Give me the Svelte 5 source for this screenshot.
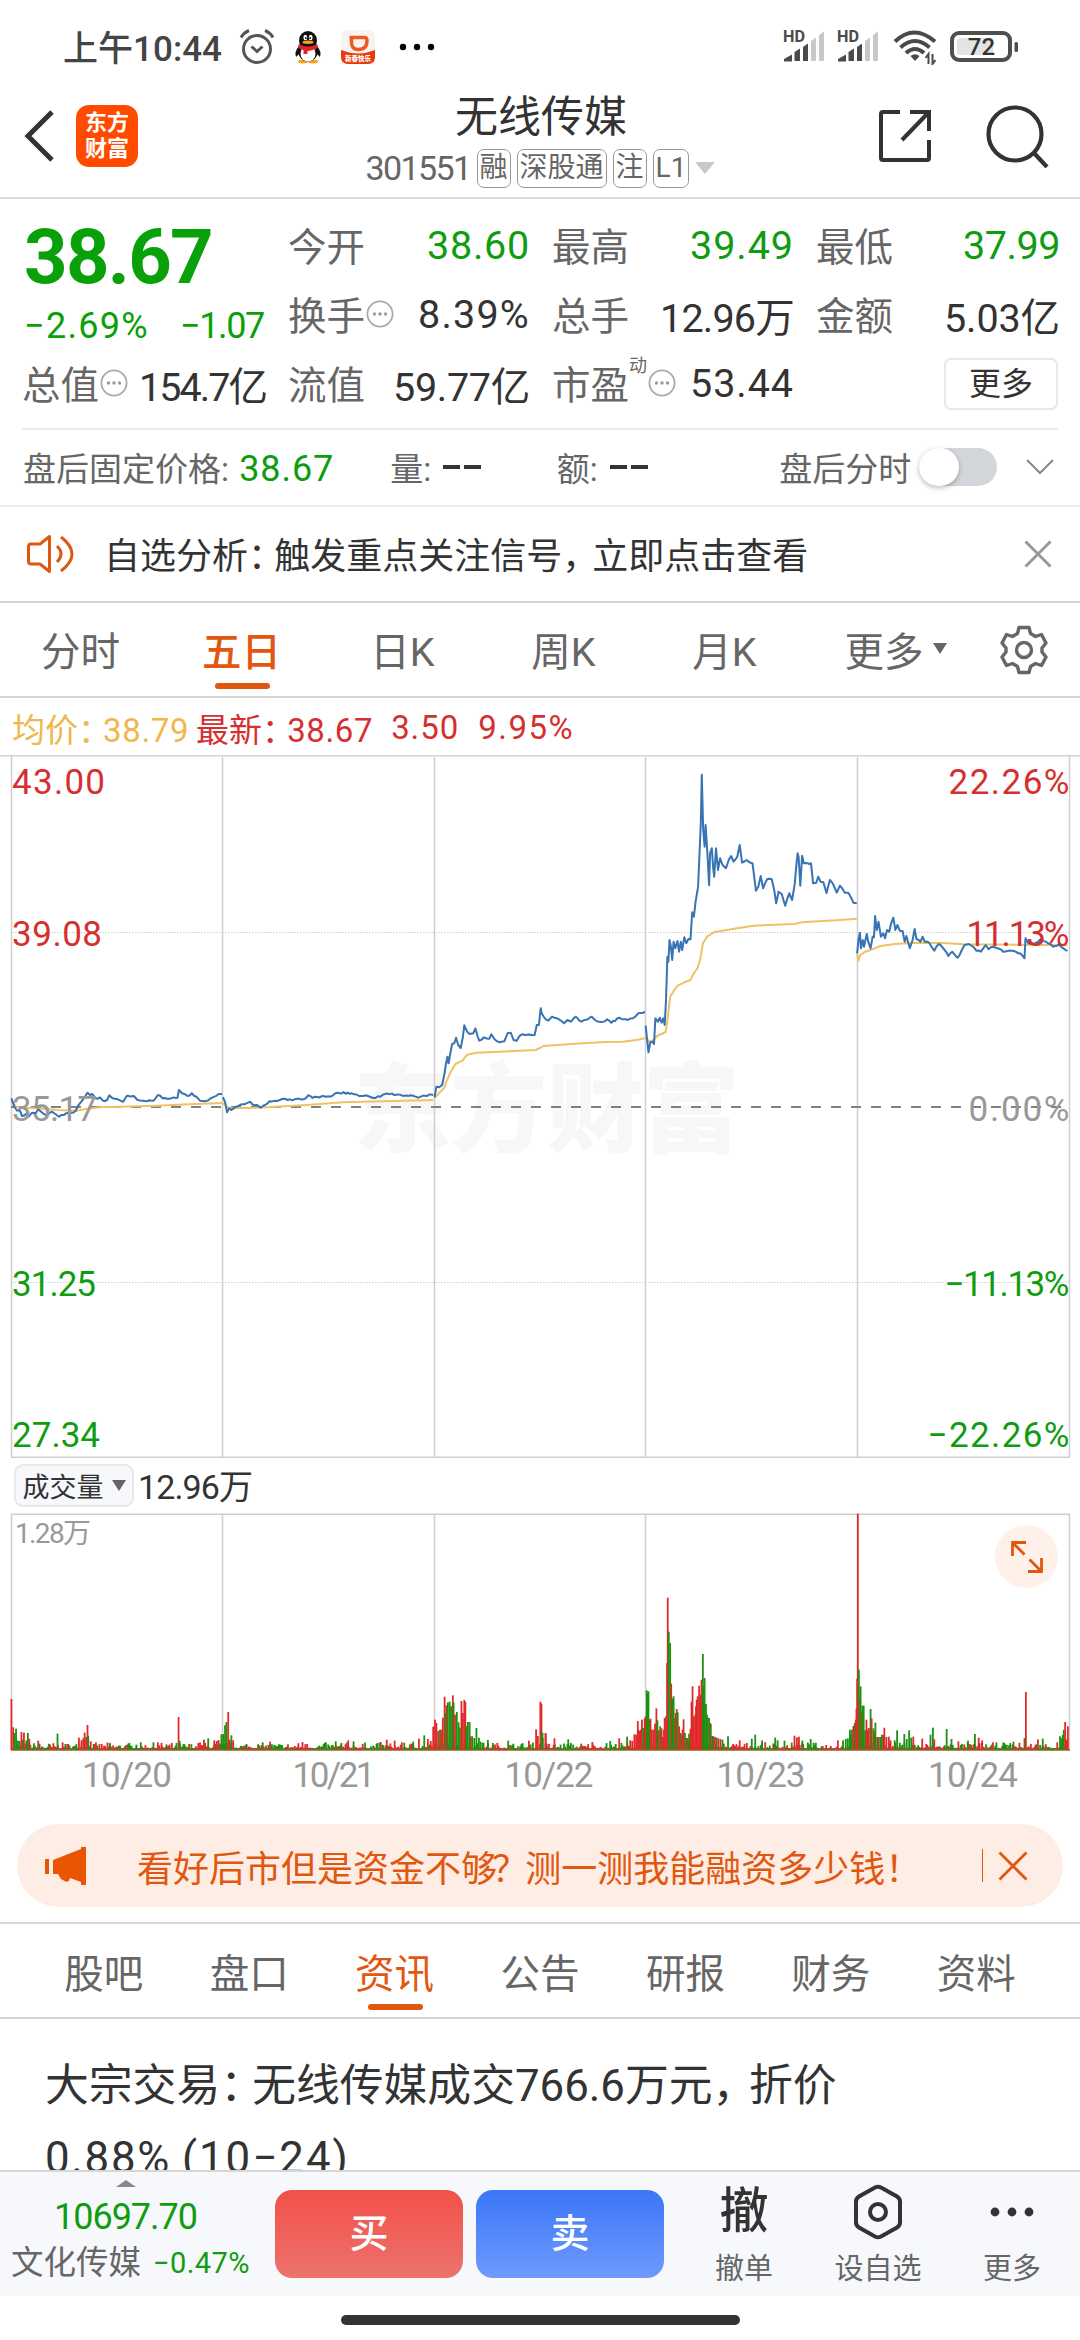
<script lang="ts">
	type Point = [number, number];

	const stats = [
		{ label: '今开', value: '38.60', width: 103, down: true },
		{ label: '最高', value: '39.49', width: 104, down: true },
		{ label: '最低', value: '37.99', width: 97, down: true },
		{ label: '换手', value: '8.39%', width: 112, info: true },
		{ label: '总手', value: '12.96万', width: 134 },
		{ label: '金额', value: '5.03亿', width: 116 },
		{ label: '总值', value: '154.7亿', width: 127, info: true },
		{ label: '流值', value: '59.77亿', width: 137 },
		{ label: '市盈', value: '53.44', width: 104, info: true, sup: '动' }
	];

	const periods = ['分时', '五日', '日K', '周K', '月K', '更多'];
	let period = '五日';

	const sections = ['股吧', '盘口', '资讯', '公告', '研报', '财务', '资料'];
	let section = '资讯';

	const dayLines = [222.5, 434.5, 645.5, 857.5];
	const dates = [
		{ text: '10/20', x: 127, width: 90 },
		{ text: '10/21', x: 334, width: 83 },
		{ text: '10/22', x: 549, width: 89 },
		{ text: '10/23', x: 761, width: 89 },
		{ text: '10/24', x: 973, width: 90 }
	];

	const axis = [
		{ y: 781, left: '43.00', lw: 93, right: '22.26%', rw: 121, tone: 'up' },
		{ y: 933, left: '39.08', lw: 90, right: '11.13%', rw: 103, tone: 'up' },
		{ y: 1108, left: '35.17', lw: 85, right: '0.00%', rw: 101, tone: 'flat' },
		{ y: 1283, left: '31.25', lw: 84, right: '−11.13%', rw: 125, tone: 'down' },
		{ y: 1434, left: '27.34', lw: 88, right: '−22.26%', rw: 142, tone: 'down' }
	];

	// Samples are kept in two halves, each with its own horizontal scale
	const L = (x: number) => x / 2.8;
	const R = (x: number) => 540 + x / 2.904;

	function parse(data: string, scale: (x: number) => number): Point[] {
		return data
			.trim()
			.split(/\s+/)
			.map((pair) => {
				const [x, y] = pair.split(',').map(Number);
				return [scale(x), 740 + y / 3];
			});
	}

	let seed = 7;
	function random() {
		seed = (seed * 16807) % 2147483647;
		return seed / 2147483647;
	}

	// Adds the small minute-to-minute movement between two samples
	function jitter(points: Point[]): Point[] {
		const out: Point[] = [];
		points.forEach(([x, y], i) => {
			out.push([x, y]);
			const next = points[i + 1];
			if (!next) return;
			const steps = Math.floor((next[0] - x) / 1.8);
			for (let s = 1; s < steps; s++) {
				const t = s / steps;
				out.push([x + (next[0] - x) * t, y + (next[1] - y) * t + (random() - 0.5) * 1.8]);
			}
		});
		return out;
	}

	const toPath = (points: Point[]) => points.map(([x, y]) => x.toFixed(1) + ',' + y.toFixed(1)).join(' ');

	const price = [
		parse(
			'32,1075 40,1100 48,1112 55,1110 62,1128 75,1120 80,1130 90,1118 100,1120 107,1108 115,1115 130,1125 145,1115 155,1122 165,1130 185,1120 200,1118 212,1112 220,1095 235,1075 245,1058 252,1065 258,1062 268,1075 280,1072 288,1082 300,1080 306,1066 315,1075 330,1078 345,1085 353,1070 375,1068 385,1080 400,1082 430,1082 442,1065 455,1075 480,1075 497,1073 501,1050 510,1060 525,1068 537,1060 550,1070 560,1082 575,1084 590,1075 600,1070 612,1062 622,1062',
			L
		),
		parse(
			'624,1072 630,1085 636,1117 642,1105 648,1110 660,1100 672,1095 690,1090 700,1085 708,1094 720,1095 730,1103 742,1095 755,1084 770,1082 790,1077 805,1080 825,1078 850,1078 863,1066 875,1074 900,1069 925,1070 945,1058 985,1060 1005,1068 1030,1068 1045,1074 1065,1070 1080,1061 1110,1064 1150,1066 1170,1073 1190,1067 1213,1065',
			L
		),
		[
			...parse(
				'1217,1072 1222,1040 1230,1042 1238,1035 1245,1000 1248,975 1253,950 1256,970 1260,945 1266,912 1272,910 1277,893 1283,915 1290,924 1296,890 1300,856 1308,875 1315,882 1325,880 1331,865 1337,888 1342,902 1355,892 1370,896 1376,883 1385,898 1398,907 1412,904 1421,880 1430,878 1438,900 1447,902 1458,885 1475,884 1497,885 1503,855 1509,855 1514,805',
				L
			),
			...parse(
				'5,820 12,832 24,842 35,830 55,838 70,850 80,840 90,845 103,830 120,845 150,830 160,840 180,846 195,838 207,848 230,833 255,840 270,835 285,820 305,815',
				R
			)
		],
		parse(
			'307,857 311,900 315,937 320,908 326,905 331,912 335,835 342,845 348,833 353,848 358,835 362,855 366,780 370,650 373,665 376,600 380,620 384,660 388,605 393,625 399,603 404,635 409,605 413,630 419,592 425,610 431,597 437,598 442,517 447,530 452,485 459,440 464,320 467,250 470,104 474,270 478,320 481,255 486,340 491,436 494,340 499,325 503,385 506,410 511,325 517,390 523,355 530,375 540,385 548,360 555,348 562,365 573,350 580,315 587,368 600,360 617,370 622,410 627,452 634,440 641,408 648,445 660,417 673,418 680,450 686,490 693,455 702,462 712,497 724,460 732,480 740,430 744,380 748,340 751,350 756,437 761,347 766,370 787,370 793,430 802,428 808,410 815,425 823,427 832,459 842,420 850,430 862,458 871,437 885,458 895,458 910,488 920,490',
			R
		),
		parse(
			'921,640 925,600 929,578 932,625 937,600 941,620 945,600 949,582 953,605 960,625 966,590 970,592 973,528 978,570 983,545 990,590 997,580 1002,595 1008,570 1014,575 1020,550 1026,533 1032,570 1038,555 1045,572 1053,573 1059,605 1064,588 1074,625 1082,600 1088,567 1093,597 1105,605 1111,590 1117,605 1130,608 1145,632 1158,612 1175,630 1186,648 1197,635 1213,653 1225,630 1233,615 1245,612 1255,618 1267,632 1280,635 1294,615 1303,628 1315,620 1328,625 1345,635 1370,632 1395,640 1407,655 1410,595 1418,610 1435,612 1457,597 1475,610 1490,620 1507,612 1520,625 1532,632',
			R
		)
	];

	const average = [
		parse('32,1080 45,1100 60,1103 100,1105 160,1110 215,1112 240,1107 280,1102 440,1097 530,1093 622,1089', L),
		parse('624,1090 636,1100 645,1105 720,1103 860,1095 960,1087 1213,1080', L),
		[
			...parse(
				'1217,1075 1230,1058 1243,1045 1250,1025 1260,1000 1275,972 1295,962 1308,944 1335,938 1500,930 1515,922',
				L
			),
			...parse('10,918 100,911 190,906 240,905 280,900 305,895', R)
		],
		parse(
			'307,888 316,905 330,900 340,888 365,876 371,830 378,770 390,750 400,737 420,727 437,720 445,703 457,685 465,660 473,610 485,590 505,577 560,567 620,557 740,552 760,547 860,541 920,536',
			R
		),
		parse('921,640 924,663 930,645 945,635 965,628 985,619 1030,612 1090,608 1170,609 1230,613 1532,616', R)
	];

	const volumeLeft =
		'32,598r 37,683r 41,700g 45,687g 50,723g 55,724g 60,697r 64,720g 67,699r 74,722g 78,700g 82,717r 107,723r 161,702g 183,733g 221,714r 228,722r 233,716r 237,699r 241,712r 245,676r 247,708g 254,725r 308,730g 352,737r 382,735g 442,728r 466,734g 500,652r 503,724g 560,728r 571,720r 583,716g 600,722r 607,724r 612,721r 620,704g 625,703g 630,677g 634,667g 639,637r 643,720r 648,707g 653,722r 690,733g 756,726r 847,727r 860,733r 940,725g 956,730g 975,722r 990,725g 1066,727r 1083,720r 1105,723r 1132,729g 1157,726g 1173,717r 1188,707g 1198,718r 1206,724r 1213,681r 1218,660r 1222,670r 1227,694r 1232,690g 1236,690r 1240,654r 1245,591r 1247,640g 1250,617r 1254,608g 1259,606g 1263,620g 1268,587r 1270,608g 1274,645r 1279,637g 1284,668g 1288,684g 1292,604r 1296,640r 1300,601r 1303,606r 1306,680g 1310,667g 1315,667g 1318,710r 1322,710g 1328,715g 1334,685g 1341,714g 1346,726g 1352,730g 1366,721g 1380,730g 1423,723g 1481,723r 1501,689r 1506,709r 1513,606r 1516,612r 1519,699g 1528,702r';
	const volumeRight =
		'5,700g 8,715g 16,700r 42,716r 82,719g 152,727r 204,724g 230,716r 253,711g 262,722r 268,724r 274,704r 279,705r 284,664r 287,692r 290,694r 293,690r 296,660r 300,685g 304,656r 307,650r 310,572g 313,580g 315,575g 318,660g 321,657r 325,690r 330,690r 334,672r 338,626r 341,662g 345,692r 349,680g 353,686r 357,712r 360,690r 362,655r 366,650r 369,490r 371,294r 374,396g 378,430g 381,552r 384,597g 388,590g 392,655g 394,640r 397,628r 400,638g 404,680r 408,700g 411,705r 414,690r 417,659r 421,700g 425,715r 429,715g 433,702g 437,687r 440,606r 443,560r 447,650r 451,645r 453,620r 455,600r 458,590r 462,558r 465,585r 467,600r 469,540r 473,463g 476,560g 478,535g 482,613g 485,645g 487,654g 491,655g 494,670r 496,673g 500,709r 504,710g 508,712r 513,714g 518,716r 524,718r 530,720g 546,710g 580,722r 615,717g 625,705g 645,722g 683,714g 690,722g 710,723g 739,708r 746,713r 752,711r 762,723g 786,718g 865,722r 880,722g 888,718g 894,716g 900,690g 903,705g 906,690g 910,679r 914,670g 917,660r 919,627r 921,537r 923,42r 926,510g 929,600r 931,560g 934,640r 936,618g 940,618g 944,692g 948,660r 952,690r 955,685r 960,628g 963,656r 968,686g 971,695r 974,669g 979,712g 983,712r 988,712g 993,705g 997,706r 1000,684r 1006,712r 1013,711r 1018,722r 1030,722g 1037,692g 1058,703g 1065,718g 1072,692g 1078,714g 1084,711r 1110,717r 1134,705g 1141,684g 1145,719r 1181,688g 1195,718g 1215,725r 1243,723g 1263,703g 1274,714r 1284,722r 1348,730g 1375,726g 1407,715g 1411,577r 1446,719r 1460,717g 1502,728r 1510,710g 1514,716g 1518,706g 1521,690g 1525,667r 1529,720r 1533,680r';

	function buildVolume() {
		const bars: { x: number; h: number; up: boolean }[] = [];
		// quiet trading
		for (let x = 12; x < 1068; x += 1.15) {
			const peak = random();
			bars.push({ x, h: 1.8 + peak * peak * peak * 6, up: Math.sin(x * 0.13) + random() * 2 > 1.1 });
		}
		const add = (data: string, scale: (x: number) => number) =>
			data.split(' ').forEach((item) => {
				const [x, rest] = item.split(',');
				bars.push({ x: scale(+x), h: (751 - parseInt(rest)) / 3, up: rest.endsWith('r') });
			});
		add(volumeLeft, L);
		add(volumeRight, R);
		return bars;
	}

	const volume = buildVolume();

	// Spreads the letters of a number so that it takes the given width
	function track(node: HTMLElement, width: number) {
		const natural = node.getBoundingClientRect().width;
		const count = (node.textContent || '').trim().length;
		node.style.letterSpacing = (width - natural) / count + 'px';
	}
</script>

{#snippet info()}
	<svg class="info" viewBox="0 0 28 28" width="28" height="28">
		<circle cx="14" cy="14" r="12.6" fill="none" stroke="#aaa" stroke-width="1.8" />
		<circle cx="8.5" cy="14" r="1.7" fill="#999" />
		<circle cx="14" cy="14" r="1.7" fill="#999" />
		<circle cx="19.5" cy="14" r="1.7" fill="#999" />
	</svg>
{/snippet}

{#snippet signal()}
	<svg width="42" height="40" viewBox="0 -6 42 40">
		<text class="hd" x="0" y="12" textLength="22" lengthAdjust="spacingAndGlyphs">HD</text>
		<path d="M1 31.500v-2.500l8-4.500v7zM11.500 31v-9l5.500-3.500v12.500zM20 31v-14l5-3.500v17.500z" fill="#4a4a4a" />
		<path d="M28 31v-20l5-3.500v23.500zM36 31v-26l5-3.500v29.500z" fill="#c8c8c8" />
	</svg>
{/snippet}

<div class="screen">
	<div class="status">
		<span class="clock" use:track={159}>上午10:44</span>
		<svg class="alarm" width="36" height="36" viewBox="0 0 36 36" fill="none" stroke="#555" stroke-width="3">
			<circle cx="18" cy="20" r="13.500" />
			<path d="M12.500 17.500l5.500 5 5.500-5M2 8.500q3-5 8-7M34 8.500q-3-5-8-7" />
		</svg>
		<svg class="qq" width="34" height="34" viewBox="0 0 34 34">
			<path d="M8 16q-5 6-3 11l4-4zM26 16q5 6 3 11l-4-4z" fill="#111" />
			<ellipse cx="12" cy="31.500" rx="5" ry="1.900" fill="#f5a71c" />
			<ellipse cx="22" cy="31.500" rx="5" ry="1.900" fill="#f5a71c" />
			<ellipse cx="17" cy="21" rx="10" ry="10.500" fill="#111" />
			<ellipse cx="17" cy="23.500" rx="7.500" ry="8" fill="#fff" />
			<ellipse cx="17" cy="10.500" rx="9" ry="9.500" fill="#111" />
			<ellipse cx="14.300" cy="7.500" rx="1.900" ry="2.700" fill="#fff" />
			<ellipse cx="19.700" cy="7.500" rx="1.900" ry="2.700" fill="#fff" />
			<circle cx="14.800" cy="8" r=".9" fill="#111" />
			<circle cx="19.200" cy="8" r=".9" fill="#111" />
			<ellipse cx="17" cy="12.300" rx="5.500" ry="1.700" fill="#f5a71c" />
			<path d="M7.500 14q9.500 5 19 0v4q-6 3-10 3v3h-4v-4q-3-.5-5-2z" fill="#e0242b" />
		</svg>
		<svg class="ride" width="34" height="34" viewBox="0 0 34 34">
			<rect width="34" height="34" rx="7" fill="#f6f3f2" />
			<path d="M0 20q17 7 34 0v7q0 7-7 7H7q-7 0-7-7z" fill="#e8380d" />
			<path d="M8.500 7.500h15q2.500 0 2.500 3c0 6-3 9-8.500 9q-7 0-7-7V8" fill="none" stroke="#ee5a1c" stroke-width="3.400" />
			<text class="ride-name" x="17" y="30.500" text-anchor="middle">新春快乐</text>
		</svg>
		<svg width="36" height="8" viewBox="0 0 36 8">
			<circle cx="4" cy="4" r="3.200" />
			<circle cx="18" cy="4" r="3.200" />
			<circle cx="32" cy="4" r="3.200" />
		</svg>
		<div class="radio">
			{@render signal()}
			{@render signal()}
			<svg class="wifi" width="44" height="36" viewBox="0 0 44 36" fill="none" stroke="#4a4a4a" stroke-width="4">
				<path d="M2 12.500q19-18 40 0M7.500 18.500q14.500-13 29 0M13 24q9-8 18 0" />
				<path d="M17.500 27q4.500-3.500 9 0l-4.500 5z" fill="#4a4a4a" stroke="none" />
				<path d="M35.500 35v-10l-3 4M39.500 25v10l3-4" stroke-width="2" />
			</svg>
			<svg width="70" height="32" viewBox="0 0 70 32">
				<rect x="2" y="2" width="58" height="27" rx="7" fill="#fff" stroke="#4f4f4f" stroke-width="4" />
				<rect x="7" y="7" width="36" height="17" rx="3" fill="#e4e4e4" />
				<rect x="64.500" y="11" width="3.500" height="10" rx="1.500" fill="#4f4f4f" />
				<text class="charge" x="31.500" y="24" text-anchor="middle">72</text>
			</svg>
		</div>
	</div>

	<header>
		<svg class="back" width="32" height="54" viewBox="0 0 32 54" fill="none" stroke="#333" stroke-width="5">
			<path d="M28 3L4 27l24 24" />
		</svg>
		<div class="logo"><span>东方</span><span>财富</span></div>
		<div class="heading">
			<h1>无线传媒</h1>
			<div class="code">
				<span class="number" use:track={105}>301551</span>
				<span class="tag">融</span>
				<span class="tag">深股通</span>
				<span class="tag">注</span>
				<span class="tag">L1</span>
				<svg width="20" height="12" viewBox="0 0 20 12"><path d="M0 0h20L10 12z" fill="#c9c9c9" /></svg>
			</div>
		</div>
		<svg class="share" width="54" height="54" viewBox="0 0 54 54" fill="none" stroke="#333" stroke-width="4">
			<path d="M22 3H5q-2 0-2 2v44q0 2 2 2h44q2 0 2-2V31M32 3h19v19M51 3L24 31" />
		</svg>
		<svg width="64" height="64" viewBox="0 0 64 64" fill="none" stroke="#333" stroke-width="4.200">
			<circle cx="29" cy="30" r="26.500" />
			<path d="M48 49l13 14" />
		</svg>
	</header>

	<section class="quote">
		<div class="last">
			<strong use:track={188}>38.67</strong>
			<div class="change">
				<span use:track={125}>−2.69%</span>
				<span use:track={84}>−1.07</span>
			</div>
		</div>
		{#each stats as item}
			<div class="stat">
				<span class="name">
					<span class="label">{item.label}</span>{#if item.sup}<sup>{item.sup}</sup>{/if}{#if item.info}{@render info()}{/if}
				</span>
				<span class="value" class:down={item.down} use:track={item.width}>{item.value}</span>
			</div>
		{/each}
		<div class="stat end"><button class="more">更多</button></div>
	</section>

	<section class="after">
		<span class="fixed">盘后固定价格: <b class="down" use:track={95}>38.67</b></span>
		<span class="pair">量: <i></i><i></i></span>
		<span class="pair amount">额: <i></i><i></i></span>
		<span class="switch-label">盘后分时</span>
		<span class="switch"><span class="knob"></span></span>
		<svg width="28" height="18" viewBox="0 0 28 18" fill="none" stroke="#888" stroke-width="2">
			<path d="M1 2l13 13L27 2" />
		</svg>
	</section>

	<section class="notice">
		<svg width="48" height="40" viewBox="0 0 48 40" fill="none" stroke="#e2570f" stroke-width="3">
			<path d="M22.500 2.500v35L13 30H4q-2.500 0-2.500-2.500v-15Q1.500 10 4 10h9z" stroke-linejoin="round" />
			<path d="M30 12q8 8 0 16M34 3q22 17 0 34" />
		</svg>
		<p>自选分析<span class="colon">：</span>触发重点关注信号<span class="comma">，</span>立即点击查看</p>
		<svg width="28" height="28" viewBox="0 0 28 28" stroke="#999" stroke-width="3">
			<path d="M1.500 1.500l25 25M26.500 1.500l-25 25" />
		</svg>
	</section>

	<nav class="periods">
		{#each periods as name}
			<button class:active={period === name} on:click={() => (period = name)}>
				{name}{#if name === '更多'}<svg class="caret" width="14" height="11" viewBox="0 0 14 11"
						><path d="M0 0h14L7 11z" fill="#666" /></svg
					>{/if}
			</button>
		{/each}
		<svg class="gear" width="48" height="50" viewBox="0 0 48 50" fill="none" stroke="#666" stroke-width="3.400">
			<path
				d="M19 2.500h10l1.500 6 5 3 6-2L46 18l-4 5v4l4 5-4.500 8.500-6-2-5 3-1.500 6H19l-1.500-6-5-3-6 2L2 32l4-5v-4l-4-5 4.500-8.500 6 2 5-3z"
				stroke-linejoin="round"
			/>
			<circle cx="24" cy="25" r="7.500" />
		</svg>
	</nav>

	<div class="legend">
		<span class="avg">均价<span class="colon">：</span><span use:track={86}>38.79</span></span>
		<span class="up latest">最新<span class="colon">：</span><span use:track={86}>38.67</span></span>
		<span class="up" use:track={68}>3.50</span>
		<span class="up" use:track={96}>9.95%</span>
	</div>

	<svg class="chart" width="1080" height="703" viewBox="0 755 1080 703">
		<text class="watermark" x="354" y="1144" textLength="386">东方财富</text>
		<g stroke="#cfcfcf" stroke-width="1.500">
			<path d="M0 755.700H1080" stroke="#d4d4d4" />
			<path d="M11.500 755V1457M1069.500 755V1457M11 1457.200H1070" />
			{#each dayLines as x}
				<path d="M{x} 757V1457" />
			{/each}
			<path d="M12 932.500H1069M12 1282.500H1069" stroke-width="1" stroke-dasharray="1.500 1.500" />
		</g>
		<path d="M11 1107H1069" stroke="#808080" stroke-width="2" stroke-dasharray="10 10" />
		{#each average as points}
			<polyline class="average" points={toPath(points)} />
		{/each}
		{#each price as points}
			<polyline class="price" points={toPath(jitter(points))} />
		{/each}
		{#each axis as row}
			<text class="tick {row.tone}" x="12" y={row.y + 12.5} textLength={row.lw}>{row.left}</text>
			<text class="tick {row.tone}" x={1069.5 - row.rw} y={row.y + 12.5} textLength={row.rw}>{row.right}</text>
		{/each}
	</svg>

	<div class="volume-head">
		<span class="chip">成交量<svg width="14" height="11" viewBox="0 0 14 11"><path d="M0 0h14L7 11z" fill="#666" /></svg></span>
		<span class="total" use:track={114}>12.96万</span>
	</div>

	<div class="volume">
		<svg width="1080" height="290" viewBox="0 1513 1080 290">
			<g stroke="#cfcfcf" stroke-width="1.500">
				<path d="M11 1514.200H1070M11.500 1514V1750M1069.500 1514V1750" />
				{#each dayLines as x}
					<path d="M{x} 1514V1750" />
				{/each}
			</g>
			{#each volume as bar}
				<rect x={bar.x - 0.9} y={1750 - bar.h} width="1.8" height={bar.h} class={bar.up ? 'bar-up' : 'bar-down'} />
			{/each}
			<path d="M11 1750H1070" stroke="#94602f" stroke-width="1.500" />
			<text class="max" x="15" y="1543" textLength="76">1.28万</text>
			{#each dates as date}
				<text class="date" x={date.x - date.width / 2} y="1787" textLength={date.width}>{date.text}</text>
			{/each}
		</svg>
		<button class="expand" aria-label="expand">
			<svg width="32" height="32" viewBox="0 0 32 32" fill="none" stroke="#e2570f" stroke-width="2.800">
				<path d="M1.500 15V1.500H15M2 2l11.500 11.500M17 30.500h13.500V17M30 30L18.500 18.500" />
			</svg>
		</button>
	</div>

	<div class="promo">
		<svg width="42" height="38" viewBox="0 0 42 38" fill="#ea5504">
			<path d="M0 12h4v15H0zM8 13L36 2V0h5v38h-5v-3l-11-4-1 3q-3 2-6-1l-2-1-3-5h-5z" />
		</svg>
		<p>看好后市但是资金不够<span class="question">？</span>测一测我能融资多少钱！</p>
		<span class="bar"></span>
		<svg width="30" height="30" viewBox="0 0 30 30" stroke="#e2570f" stroke-width="2.800">
			<path d="M1.500 1.500l27 27M28.500 1.500l-27 27" />
		</svg>
	</div>

	<nav class="sections">
		{#each sections as name}
			<button class:active={section === name} on:click={() => (section = name)}>{name}</button>
		{/each}
	</nav>

	<article>
		大宗交易<span class="colon">：</span>无线传媒成交<span use:track={110}>766.6</span>万元<span class="comma">，</span>折价<br />
		<span use:track={126}>0.88%</span> <span use:track={168}>(10−24)</span>
	</article>

	<footer>
		<div class="index">
			<svg width="20" height="7" viewBox="0 0 20 7"><path d="M10 0l10 7H0z" fill="#888" /></svg>
			<span class="points down" use:track={143}>10697.70</span>
			<div class="sector">文化传媒 <span class="down" use:track={97}>−0.47%</span></div>
		</div>
		<button class="trade buy">买</button>
		<button class="trade sell">卖</button>
		<div class="action">
			<span class="glyph">撤</span>
			<span>撤单</span>
		</div>
		<div class="action">
			<svg width="50" height="56" viewBox="0 0 50 56" fill="none" stroke="#333" stroke-width="4">
				<path d="M22 3.500q3-1.500 6 0l16 9q3 2 3 5v21q0 3-3 5l-16 9q-3 1.500-6 0l-16-9q-3-2-3-5v-21q0-3 3-5z" />
				<circle cx="25" cy="28" r="8" />
			</svg>
			<span>设自选</span>
		</div>
		<div class="action">
			<svg width="44" height="10" viewBox="0 0 44 10" fill="#333">
				<circle cx="5" cy="5" r="4.400" />
				<circle cx="22" cy="5" r="4.400" />
				<circle cx="39" cy="5" r="4.400" />
			</svg>
			<span>更多</span>
		</div>
	</footer>
	<div class="home"><span></span></div>
</div>

<style>
	:global(body) {
		background: #fff;
	}
	.screen {
		width: 1080px;
		height: 2340px;
		overflow: hidden;
		background: #fff;
		color: #333;
		font-family: Roboto, 'Noto Sans CJK SC', sans-serif;
		font-size: 36px;
		display: flex;
		flex-direction: column;
	}
	.screen > * {
		box-sizing: border-box;
		flex: none;
	}
	svg {
		display: block;
		flex: none;
	}
	button {
		border: 0;
		padding: 0;
		background: none;
		font: inherit;
		color: inherit;
	}
	p,
	h1 {
		margin: 0;
		white-space: nowrap;
	}
	span {
		white-space: nowrap;
	}
	.up {
		color: #d62f2f;
		fill: #d62f2f;
	}
	.down {
		color: #109c10;
		fill: #109c10;
	}
	.flat {
		fill: #999;
	}
	/* half-width punctuation with a little air behind it */
	.colon,
	.comma {
		font-feature-settings: 'halt';
		margin-right: 0.23em;
	}
	.comma {
		margin-right: 0.33em;
	}
	.question {
		margin: 0 -0.08em 0 -0.14em;
	}

	/* status bar */
	.status {
		height: 98px;
		padding: 0 60px 4px 63px;
		display: flex;
		align-items: center;
	}
	.clock {
		font-size: 35px;
		font-weight: 500;
		color: #444;
		margin-top: -3px;
	}
	.alarm {
		margin-left: 17px;
	}
	.qq {
		margin-left: 16px;
	}
	.ride {
		margin: 0 24px 0 16px;
	}
	.ride-name {
		font-size: 6.500px;
		font-weight: 900;
		fill: #fff;
	}
	.radio {
		margin-left: auto;
		display: flex;
		align-items: center;
		gap: 13.500px;
	}
	.radio svg:first-child {
		margin-right: -1.500px;
	}
	.radio svg:nth-child(-n + 2) {
		margin-top: -7px;
	}
	.hd {
		font-size: 16px;
		font-weight: 700;
		fill: #4a4a4a;
	}
	.charge {
		font-size: 24px;
		font-weight: 500;
		fill: #333;
	}

	/* title bar */
	header {
		height: 101px;
		padding: 0 30px 0 24px;
		border-bottom: 2px solid #dadada;
		display: flex;
		align-items: center;
	}
	.back {
		margin-top: -24px;
	}
	.logo {
		width: 62px;
		height: 62px;
		margin: -24px 0 0 20px;
		border-radius: 13px;
		background: #ff4a00;
		color: #fff;
		font-size: 22px;
		font-weight: 700;
		line-height: 26px;
		display: flex;
		flex-direction: column;
		align-items: center;
		justify-content: center;
	}
	.heading {
		flex: 1;
		height: 100%;
		margin-left: 71px;
		display: flex;
		flex-direction: column;
		align-items: center;
	}
	h1 {
		font-size: 43px;
		font-weight: 400;
		line-height: 42px;
		margin: -2px 5px 3px 0;
	}
	.code {
		display: flex;
		align-items: center;
		gap: 6px;
		height: 54px;
		margin-right: 6px;
		color: #666;
	}
	.number {
		font-size: 34px;
	}
	.tag {
		box-sizing: border-box;
		height: 39px;
		padding: 0 2px;
		border: 1.500px solid #999;
		border-radius: 7px;
		font-size: 28px;
		line-height: 35px;
	}
	.share {
		margin: -24px 54px 0 0;
	}
	header > svg:last-child {
		margin-top: -24px;
	}

	/* quote */
	.quote {
		height: 229px;
		padding: 12px 22px 0;
		display: grid;
		grid-template-columns: 242px 240px 240px 242px;
		grid-template-rows: repeat(3, 69px);
		column-gap: 24px;
	}
	.last {
		grid-row: span 2;
		color: #09a009;
		padding: 11px 0 0 2px;
	}
	.last strong {
		font-size: 76px;
		line-height: 70px;
		display: inline-block;
		vertical-align: top;
	}
	.change {
		display: flex;
		justify-content: space-between;
		font-size: 36px;
		line-height: 68px;
	}
	.stat {
		display: flex;
		align-items: center;
		justify-content: space-between;
	}
	.name {
		display: flex;
		align-items: center;
		font-size: 38.500px;
		color: #666;
	}
	.label {
		margin-top: -4px;
	}
	.name sup {
		font-size: 18px;
		margin-top: -40px;
	}
	.name svg {
		margin: -2px 0 0 1px;
	}
	.value {
		font-size: 39.500px;
		margin-right: -2px;
	}
	.end {
		justify-content: flex-end;
	}
	.more {
		width: 114px;
		height: 52px;
		border: 2px solid #e8e8e8;
		border-radius: 7px;
		font-size: 32px;
		line-height: 46px;
	}

	/* after-hours */
	.after {
		height: 79px;
		padding: 0 26px 0 23px;
		border-bottom: 2px solid #ececec;
		background: linear-gradient(#ececec, #ececec) 22px 0 / 1036px 2px no-repeat;
		display: flex;
		align-items: center;
		font-size: 33px;
		color: #666;
	}
	.after b {
		font-weight: 400;
		font-size: 36px;
		display: inline-block;
		margin-left: 2px;
	}
	.fixed {
		width: 368px;
	}
	.pair {
		width: 167px;
		display: flex;
		align-items: center;
	}
	.pair i {
		width: 17px;
		height: 4px;
		margin-left: 4px;
		background: #333;
	}
	.pair i:first-of-type {
		margin-left: 12px;
	}
	.amount {
		width: 223px;
	}
	.switch {
		width: 78px;
		height: 38px;
		margin: 0 29px 0 8px;
		border-radius: 19px;
		background: #d2d6db;
		display: flex;
		align-items: center;
	}
	.knob {
		width: 40px;
		height: 38px;
		border-radius: 20px;
		background: #fff;
		box-shadow: 0 2px 5px rgba(0, 0, 0, 0.25);
	}

	/* notice */
	.notice {
		height: 96px;
		padding: 0 28px 0 27px;
		border-bottom: 2px solid #d6d6d6;
		display: flex;
		align-items: center;
	}
	.notice p {
		flex: 1;
		margin: -3px 0 0 29px;
		font-size: 36px;
	}

	/* tab bars */
	.periods {
		height: 95px;
		border-bottom: 2px solid #d6d6d6;
		display: flex;
		align-items: center;
	}
	.periods button,
	.sections button {
		height: 100%;
		font-size: 39.500px;
		color: #666;
		display: flex;
		align-items: center;
		justify-content: center;
		position: relative;
	}
	.periods button {
		width: 161px;
		padding-bottom: 2px;
	}
	.periods button:nth-of-type(6) {
		width: 181px;
	}
	.caret {
		margin-left: 9px;
	}
	button.active {
		color: #e2570f;
	}
	.periods .active {
		font-weight: 500;
	}
	button.active::after {
		content: '';
		position: absolute;
		left: 50%;
		bottom: 7px;
		width: 55px;
		height: 6px;
		margin-left: -27px;
		border-radius: 3px;
		background: #e2570f;
	}
	.gear {
		margin-left: 14px;
	}

	.legend {
		height: 57px;
		padding: 2px 0 0 12px;
		display: flex;
		align-items: center;
		font-size: 33px;
	}
	.legend > span {
		margin-right: 19px;
	}
	.legend .colon {
		margin-right: 0.26em;
	}
	.legend .avg {
		color: #efb84c;
		margin-right: 7px;
	}
	.legend .latest {
		margin-right: 18px;
	}
	.legend span span:last-child {
		display: inline-block;
	}

	/* price chart */
	.price,
	.average {
		fill: none;
		stroke-width: 2;
		stroke-linejoin: round;
	}
	.price {
		stroke: #3873b3;
	}
	.average {
		stroke: #f0c265;
	}
	.tick {
		font-size: 35px;
	}
	.watermark {
		font-size: 97px;
		font-weight: 900;
		fill: #f7f7f7;
	}

	/* volume */
	.volume-head {
		height: 55px;
		padding-left: 14px;
		display: flex;
		align-items: center;
		gap: 4px;
	}
	.chip {
		box-sizing: border-box;
		width: 120px;
		height: 43px;
		border: 2px solid #e6e8eb;
		border-radius: 9px;
		background: #f6f8fb;
		font-size: 27px;
		display: flex;
		align-items: center;
		justify-content: center;
		gap: 8px;
	}
	.total {
		font-size: 34px;
		margin-top: -3px;
	}
	.volume {
		height: 280px;
		position: relative;
	}
	.bar-up {
		fill: #e02a2a;
	}
	.bar-down {
		fill: #1d910f;
	}
	.max {
		font-size: 28px;
		fill: #999;
	}
	.date {
		font-size: 35px;
		fill: #999;
	}
	.expand {
		position: absolute;
		right: 22px;
		top: 12px;
		width: 63px;
		height: 63px;
		border-radius: 50%;
		background: #fff1ea;
		display: flex;
		align-items: center;
		justify-content: center;
	}

	/* promo */
	.promo {
		height: 83px;
		margin: 31px 17px 15px;
		padding: 0 35px 0 28px;
		border-radius: 42px;
		background: #fdede4;
		color: #e2570f;
		display: flex;
		align-items: center;
	}
	.promo p {
		flex: 1;
		margin-left: 50px;
		font-size: 36px;
	}
	.bar {
		width: 1px;
		height: 33px;
		margin-right: 15px;
		background: #e2570f;
	}

	.sections {
		height: 97px;
		padding: 0 31px;
		border-top: 2px solid #d6d6d6;
		border-bottom: 2px solid #d6d6d6;
		display: flex;
	}
	.sections button {
		flex: 1;
	}

	article {
		height: 151px;
		padding: 31px 0 0 45px;
		overflow: hidden;
		font-size: 43.800px;
		line-height: 72px;
	}
	article span {
		display: inline-block;
	}

	/* trade bar */
	footer {
		height: 126px;
		border-top: 2px solid #d6d6d6;
		background: #f6f8fb;
		display: flex;
		align-items: flex-start;
	}
	.index {
		width: 251px;
		margin-right: 24px;
		display: flex;
		flex-direction: column;
		align-items: center;
	}
	.index svg {
		margin: 8px 0 7px;
	}
	.points {
		font-size: 36px;
		line-height: 47px;
	}
	.sector {
		font-size: 32.500px;
		line-height: 44px;
		color: #666;
		white-space: nowrap;
		display: flex;
		gap: 12px;
		margin-left: 10px;
	}
	.sector span {
		font-size: 29px;
	}
	.trade {
		width: 188px;
		height: 88px;
		margin: 18px 13px 0 0;
		border-radius: 17px;
		color: #fff;
		font-size: 39px;
		font-weight: 500;
		line-height: 80px;
	}
	.buy {
		background: linear-gradient(#f25049, #ec736d);
	}
	.sell {
		background: linear-gradient(#3b76f8, #6f9afc);
	}
	.action {
		width: 134px;
		height: 112px;
		display: grid;
		grid-template-rows: 79px 29px;
		place-items: center;
		font-size: 29px;
		color: #666;
	}
	.glyph {
		font-size: 49px;
		font-weight: 500;
		line-height: 60px;
		color: #333;
	}
	.home {
		display: flex;
		justify-content: center;
		padding-top: 19px;
	}
	.home span {
		width: 399px;
		height: 10px;
		border-radius: 5px;
		background: #333;
	}
</style>
